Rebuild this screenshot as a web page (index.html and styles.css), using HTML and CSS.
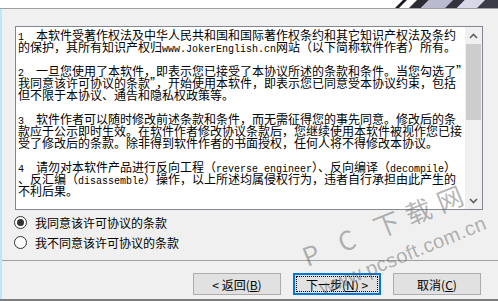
FILE: index.html
```html
<!DOCTYPE html>
<html lang="zh-CN">
<head>
  <meta charset="UTF-8">
  <title>许可协议</title>
  <link rel="stylesheet" href="styles.css">
</head>
<body>
  <div class="window">
    <div class="banner">
      <svg class="banner-art" width="103" height="8" viewBox="0 0 103 8">
        <polygon points="0,8 4,8 12,0 8,0" fill="#1e1e22"/>
        <polygon points="14,8 26,8 34,0 22,0" fill="#2c2c34"/>
        <polygon points="26,8 50,8 58,0 34,0" fill="#b9b9cf"/>
        <polygon points="50,8 62,8 70,0 58,0" fill="#34343f"/>
        <polygon points="62,8 82,8 90,0 70,0" fill="#d8d8e6"/>
        <polygon points="82,8 103,8 103,0 90,0" fill="#3b3b48"/>
      </svg>
    </div>

    <div class="main">
      <div class="content">
        <div class="license">
          <div class="license-text">
            <p><span class="en">1  </span>本软件受著作权法及中华人民共和国和国际著作权条约和其它知识产权法及条约<br>的保护，其所有知识产权归<span class="en">www.JokerEnglish.cn</span>网站（以下简称软件作者）所有。</p>
            <p><span class="en">2  </span>一旦您使用了本软件，即表示您已接受了本协议所述的条款和条件。当您勾选了”<br>我同意该许可协议的条款”，开始使用本软件，即表示您已同意受本协议约束，包括<br>但不限于本协议、通告和隐私权政策等。</p>
            <p><span class="en">3  </span>软件作者可以随时修改前述条款和条件，而无需征得您的事先同意。修改后的条<br>款应于公示即时生效。在软件作者修改协议条款后，您继续使用本软件被视作您已接<br>受了修改后的条款。除非得到软件作者的书面授权，任何人将不得修改本协议。</p>
            <p><span class="en">4  </span>请勿对本软件产品进行反向工程（<span class="en">reverse engineer</span>）、反向编译（<span class="en">decompile</span>）<br>、反汇编（<span class="en">disassemble</span>）操作，以上所述均属侵权行为，违者自行承担由此产生的<br>不利后果。</p>
          </div>
          <div class="scrollbar">
            <div class="sb-btn">
              <svg width="9" height="6" viewBox="0 0 9 6"><polyline points="1,5 4.5,1.5 8,5" fill="none" stroke="#606060" stroke-width="1.6"/></svg>
            </div>
            <div class="sb-track"><div class="sb-thumb"></div></div>
            <div class="sb-btn">
              <svg width="9" height="6" viewBox="0 0 9 6"><polyline points="1,1 4.5,4.5 8,1" fill="none" stroke="#606060" stroke-width="1.6"/></svg>
            </div>
          </div>
        </div>

        <div class="options">
          <label class="radio"><span class="radio-mark checked"></span>我同意该许可协议的条款</label>
          <label class="radio"><span class="radio-mark"></span>我不同意该许可协议的条款</label>
        </div>
      </div>

      <div class="separator"></div>

      <div class="footer">
        <button class="btn">&lt; 返回(<u>B</u>)</button>
        <button class="btn btn-default"><span class="focus">下一步(<u>N</u>) &gt;</span></button>
        <button class="btn">取消(<u>C</u>)</button>
      </div>
    </div>

    <div class="watermark">
      <span class="wm-big">P C 下载网</span>
      <span class="wm-small">www.pcsoft.com.cn</span>
    </div>
  </div>
</body>
</html>
```

FILE: styles.css
```css
* {
  box-sizing: border-box;
}

body {
  margin: 0;
  background-color: #f0f0f0;
  font-family: "Noto Sans CJK SC", sans-serif;
  color: #000;
}

.window {
  position: relative;
  width: 498px;
  height: 301px;
  display: flex;
  flex-direction: column;
  overflow: hidden;
  border-bottom: 2px solid #7d7d7d;
}

.banner {
  height: 9px;
  background: #fff;
  border-bottom: 1px solid #a0a0a0;
  display: flex;
  justify-content: flex-end;
  overflow: hidden;
}

.main {
  flex: 1;
  display: flex;
  flex-direction: column;
  border-left: 2px solid #bde6f8;
}

.content {
  padding: 17px 0 0 13px;
}

/* license box */
.license {
  width: 468px;
  height: 184px;
  border: 1px solid #828790;
  background: #fff;
  display: flex;
}

.license-text {
  flex: 1;
  padding: 2px 0 0 2px;
  font-size: 12px;
  line-height: 12px;
  overflow: hidden;
}

.license-text p {
  margin: 0 0 12px;
  white-space: pre;
}

.en {
  font-family: "Liberation Mono", monospace;
  font-size: 10px;
  line-height: 0;
}

.scrollbar {
  width: 17px;
  background: #f0f0f0;
  display: flex;
  flex-direction: column;
}

.sb-btn {
  height: 17px;
  display: flex;
  align-items: center;
  justify-content: center;
}

.sb-track {
  flex: 1;
  padding: 0 1px;
}

.sb-thumb {
  height: 76px;
  background: #cdcdcd;
}

/* radios */
.options {
  padding-top: 2px;
  margin-left: -1px;
}

.radio {
  height: 20px;
  display: flex;
  align-items: center;
  gap: 8px;
  font-size: 12px;
}

.radio-mark {
  width: 13px;
  height: 13px;
  border: 1px solid #333;
  border-radius: 50%;
  background: #fff;
  display: flex;
  align-items: center;
  justify-content: center;
}

.radio-mark.checked::before {
  content: "";
  width: 7px;
  height: 7px;
  border-radius: 50%;
  background: #333;
}

.separator {
  margin-top: 8px;
  height: 1px;
  background: #a0a0a0;
}

/* buttons */
.footer {
  display: flex;
  justify-content: flex-end;
  gap: 12px;
  padding: 12px 17px 0 0;
}

.btn {
  width: 88px;
  height: 22px;
  padding: 0;
  background: #e1e1e1;
  border: 1px solid #adadad;
  font-family: "Noto Sans CJK SC", sans-serif;
  font-size: 12px;
  color: #000;
}

.btn-default {
  border: 2px solid #0078d7;
  padding: 1px;
}

.btn-default .focus {
  display: flex;
  align-items: center;
  justify-content: center;
  height: 100%;
  border: 1px dotted #000;
}

/* site watermark over the screenshot */
.watermark {
  position: absolute;
  inset: 0;
  pointer-events: none;
}

.wm-big {
  position: absolute;
  left: 308px;
  top: 243px;
  font-size: 26px;
  line-height: 26px;
  letter-spacing: 8px;
  white-space: nowrap;
  color: rgba(90, 90, 90, 0.45);
  transform: rotate(-22deg);
  transform-origin: 0 100%;
}

.wm-small {
  position: absolute;
  left: 324px;
  top: 278px;
  font-family: "Liberation Sans", sans-serif;
  font-size: 20px;
  line-height: 20px;
  letter-spacing: 0.4px;
  white-space: nowrap;
  color: rgba(90, 90, 90, 0.45);
  transform: rotate(-22deg);
  transform-origin: 0 100%;
}
```
